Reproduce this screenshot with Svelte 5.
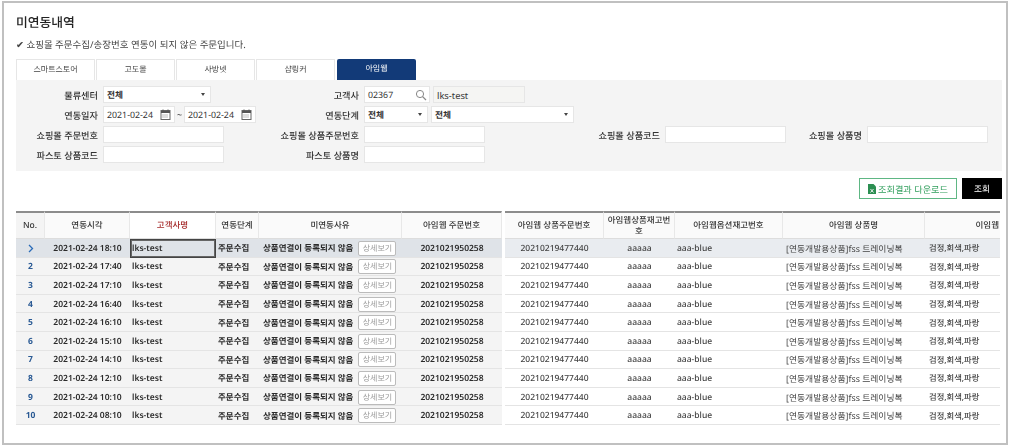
<script>
  const tabs = ['스마트스토어', '고도몰', '사방넷', '샵링커', '아임웹'];
  const times = ['18:10', '17:40', '17:10', '16:40', '16:10', '15:10', '14:10', '12:10', '10:10', '08:10'];
  const headers = [
    { label: 'No.', cls: 'first' },
    { label: '연동시각' },
    { label: '고객사명', cls: 'req' },
    { label: '연동단계' },
    { label: '미연동사유' },
    { label: '아임웹 주문번호' },
    { label: '', cls: 'gap' },
    { label: '아임웹 상품주문번호' },
    { label: '아임웹상품재고번호', cls: 'wrap' },
    { label: '아임웹옵션재고번호' },
    { label: '아임웹 상품명' },
    { label: '이임웹', cls: 'cut' }
  ];
</script>

{#snippet calendar()}
  <svg class="cal" width="11" height="11" viewBox="0 0 11 11">
    <rect x="1" y="1.5" width="9" height="9" fill="none" stroke="#666"/>
    <path d="M1 3h9" stroke="#555" stroke-width="2"/>
    <path d="M3 .5v2M8 .5v2" stroke="#555"/>
    <path d="M2.5 6h6M2.5 8h6" stroke="#777" stroke-dasharray="1 1"/>
  </svg>
{/snippet}

<div class="page">
  <h1>미연동내역</h1>
  <p class="note">✔ 쇼핑몰 주문수집/송장번호 연동이 되지 않은 주문입니다.</p>

  <div class="tabs">
    {#each tabs as tab, i}
      <button class="tab" class:active={i === 4}>{tab}</button>
    {/each}
  </div>

  <div class="filters">
    <div class="row">
      <div class="label l1">물류센터</div>
      <div class="select w107"><b>전체</b><i></i></div>
      <div class="label l2">고객사</div>
      <div class="input w66">02367
        <svg class="search" width="12" height="12" viewBox="0 0 12 12"><circle cx="5" cy="5" r="3.6" fill="none" stroke="#888" stroke-width="1"/><path d="M7.6 7.6 11 11" stroke="#888" stroke-width="1.2"/></svg>
      </div>
      <div class="input ro">lks-test</div>
    </div>
    <div class="row">
      <div class="label l1">연동일자</div>
      <div class="input date">2021-02-24{@render calendar()}</div>
      <span class="tilde">~</span>
      <div class="input date">2021-02-24{@render calendar()}</div>
      <div class="label l2b">연동단계</div>
      <div class="select w63"><b>전체</b><i></i></div>
      <div class="select w143"><b>전체</b><i></i></div>
    </div>
    <div class="row">
      <div class="label l1">쇼핑몰 주문번호</div>
      <div class="input w121"></div>
      <div class="label l2c">쇼핑몰 상품주문번호</div>
      <div class="input w121"></div>
      <div class="label l3">쇼핑몰 상품코드</div>
      <div class="input w121"></div>
      <div class="label l4">쇼핑몰 상품명</div>
      <div class="input w121"></div>
    </div>
    <div class="row">
      <div class="label l1">파스토 상품코드</div>
      <div class="input w121"></div>
      <div class="label l2c">파스토 상품명</div>
      <div class="input w121"></div>
    </div>
  </div>

  <div class="actions">
    <button class="excel">
      <svg width="8" height="10" viewBox="0 0 8 10"><path d="M0 0h5.5L8 2.5V10H0z" fill="#2c8f52"/><path d="M2.5 5l3 3.5M5.5 5l-3 3.5" stroke="#fff" stroke-width=".9"/></svg>
      조회결과 다운로드
    </button>
    <button class="search-btn">조회</button>
  </div>

  <div class="grid">
    <div class="line">
      {#each headers as h}
        <div class="th {h.cls ?? ''}">{h.label}</div>
      {/each}
    </div>
    {#each times as t, i}
      <div class="line body" class:sel={i === 0}>
        <div class="td no">
          {#if i === 0}
            <svg width="6" height="9" viewBox="0 0 6 9"><path d="M1 1l3.5 3.5L1 8" fill="none" stroke="#2b6cb8" stroke-width="1.3"/></svg>
          {:else}
            {i + 1}
          {/if}
        </div>
        <div class="td fz c">2021-02-24 {t}</div>
        <div class="td fz" class:focus={i === 0}>lks-test</div>
        <div class="td fz">주문수집</div>
        <div class="td fz reason">상품연결이 등록되지 않음<span class="detail">상세보기</span></div>
        <div class="td fz c">2021021950258</div>
        <div class="td gap"></div>
        <div class="td c">20210219477440</div>
        <div class="td c">aaaaa</div>
        <div class="td">aaa-blue</div>
        <div class="td name">[연동개발용상품]fss 트레이닝복</div>
        <div class="td color">검정,회색,파랑</div>
      </div>
    {/each}
  </div>
</div>

<style>
  :global(body) {
    margin: 0;
    background: #fff;
  }

  .page {
    box-sizing: border-box;
    width: 1006px;
    height: 444px;
    margin-left: 2px;
    margin-top: 1px;
    border: 2px solid #c0c0c0;
    padding: 0 4px 0 12px;
    font-family: "Noto Sans", "Noto Sans CJK KR", sans-serif;
    text-rendering: geometricPrecision;
    color: #333;
    overflow: hidden;
    filter: blur(0.3px);
  }

  h1 {
    margin: 10px 0 0;
    font-size: 12.8px;
    line-height: 18px;
    font-weight: 500;
    color: #222;
  }

  .note {
    margin: 7px 0 0;
    font-size: 9.5px;
    line-height: 14px;
    color: #444;
  }

  .tabs {
    display: flex;
    gap: 1px;
    margin-top: 7px;
    height: 21px;
  }

  .tab {
    width: 79px;
    height: 21px;
    padding: 0 0 2px;
    border: 1px solid #e6e6e6;
    border-bottom: 0;
    background: #fff;
    font: inherit;
    font-size: 8px;
    text-rendering: inherit;
    color: #444;
  }

  .tab.active {
    margin-left: 1px;
    border: 0;
    border-radius: 2px 2px 0 0;
    background: #123a78;
    color: #fff;
  }

  .filters {
    height: 91px;
    padding-top: 6px;
    box-sizing: border-box;
    background: #f4f4f4;
  }

  .row {
    display: flex;
    align-items: center;
    height: 17px;
    margin-bottom: 3px;
    font-size: 9.2px;
  }

  .label {
    flex: none;
    box-sizing: border-box;
    padding-right: 5px;
    text-align: right;
    font-weight: 500;
    color: #333;
  }

  .l1 { width: 87px; }
  .l2 { width: 153px; }
  .l2b { width: 108px; }
  .l2c { width: 140px; }
  .l3 { width: 180px; }
  .l4 { width: 81px; }

  .input,
  .select {
    flex: none;
    position: relative;
    box-sizing: border-box;
    height: 17px;
    line-height: 17px;
    padding-left: 3px;
    border: 1px solid #e6e6e6;
    background: #fff;
    font-size: 8.8px;
    color: #333;
  }

  .select b {
    font-size: 8.7px;
    font-weight: 700;
  }

  .select i {
    position: absolute;
    right: 5px;
    top: 6px;
    border: 2.5px solid transparent;
    border-top: 3.5px solid #444;
    border-bottom: 0;
  }

  .w107 { width: 108px; }
  .w63 { width: 64px; }
  .w143 { width: 143px; margin-left: 3px; }
  .w66 { width: 66px; }
  .w121 { width: 121px; }
  .ro {
    width: 92px;
    margin-left: 3px;
    background: #f5f5f3;
    font-size: 9.3px;
  }
  .date { width: 72px; }
  .tilde { width: 9px; text-align: center; font-size: 9px; }

  .search {
    position: absolute;
    right: 2px;
    top: 2px;
  }

  .cal {
    position: absolute;
    right: 3px;
    top: 2px;
  }

  .actions {
    display: flex;
    justify-content: flex-end;
    gap: 5px;
    margin-top: 7px;
    height: 21px;
  }

  .actions button {
    padding: 0;
    font: inherit;
    font-size: 9.2px;
    text-rendering: inherit;
  }

  .excel {
    display: flex;
    align-items: center;
    justify-content: center;
    gap: 2px;
    width: 98px;
    border: 1px solid #5fb784;
    background: #fff;
    color: #2f9e5b;
  }

  .actions .search-btn {
    width: 40px;
    border: 0;
    background: #000;
    color: #fff;
    font-size: 8.7px;
  }

  .grid {
    margin-top: 12px;
    width: 984px;
  }

  .line {
    display: grid;
    grid-template-columns: 29px 85px 86px 43px 143px 100px 3px 99px 71px 108px 142px 75px;
  }

  .th {
    display: flex;
    align-items: center;
    justify-content: center;
    height: 28px;
    box-sizing: border-box;
    border-top: 2px solid #8c8c8c;
    border-right: 1px solid #e8e8e8;
    border-bottom: 1px solid #ddd;
    background: #fafafa;
    padding: 0 1px;
    text-align: center;
    font-size: 8.5px;
    line-height: 11px;
    font-weight: 500;
    color: #333;
  }

  .th.first {
    background: #f4f4f4;
  }

  .th.req {
    background: #fff;
    color: #a52a2a;
  }

  .th.cut {
    justify-content: flex-end;
    border-right: 0;
    padding-right: 1px;
  }

  .th.gap,
  .td.gap {
    border: 0;
    background: #fff;
  }

  .body {
    height: 18.6px;
  }

  .td {
    display: flex;
    align-items: center;
    box-sizing: border-box;
    min-width: 0;
    padding: 1px 0 0 2px;
    border-bottom: 1px solid #e4e4e4;
    background: #fff;
    font-size: 8.5px;
    font-weight: 500;
    color: #444;
    white-space: nowrap;
    overflow: hidden;
  }

  .td.fz {
    background: #f4f4f4;
    color: #2b2b2b;
    font-weight: 600;
  }

  .td.c {
    justify-content: center;
    padding-left: 0;
  }

  .td.name {
    padding-left: 3px;
    font-size: 8.8px;
    font-weight: 400;
  }

  .td.color {
    padding-left: 4px;
    font-size: 8.3px;
  }

  .td.no {
    justify-content: center;
    padding-left: 0;
    background: #f4f4f4;
    color: #2a5a94;
    font-weight: 700;
  }

  .sel .td {
    background: #e9ecf0;
  }

  .sel .td.fz,
  .sel .td.no {
    background: #dfe3e8;
  }

  .sel .td.gap {
    background: #fff;
  }

  .td.focus {
    border: 1px solid #444;
    box-shadow: inset 0 0 0 1px #666;
    padding-left: 1px;
  }

  .td.reason {
    padding-left: 4px;
  }

  .detail {
    flex: none;
    width: 38px;
    height: 15px;
    line-height: 13px;
    box-sizing: border-box;
    margin-left: 5px;
    border: 1px solid #bbb;
    border-radius: 2px;
    background: #fff;
    text-align: center;
    font-size: 8px;
    font-weight: 400;
    color: #999;
  }
</style>
